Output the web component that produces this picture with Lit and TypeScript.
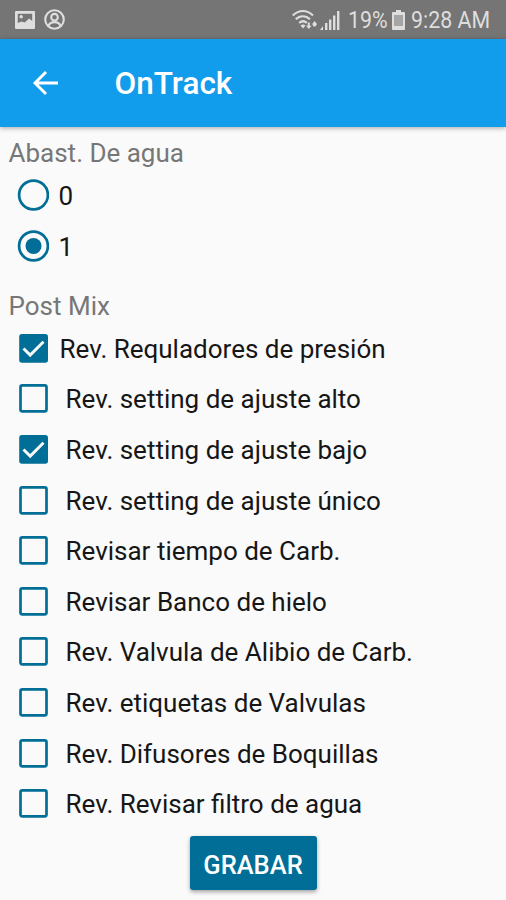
import { LitElement, html, css, svg } from "lit";
import { customElement, property, state } from "lit/decorators.js";
import { classMap } from "lit/directives/class-map.js";

@customElement("status-bar")
class StatusBar extends LitElement {
  static styles = css`
    :host { display: flex; justify-content: space-between; height: 38.5px; background: #757575; color: #dedede; }
    .left, .right { display: flex; align-items: center; }
    .left { padding: 1px 0 0 15px; gap: 9px; }
    .right { padding: 2px 16px 0 0; }
    svg { display: block; }
    .bars { margin-left: 2px; }
    .text { font-size: 24px; line-height: 26px; white-space: nowrap; }
    .pct { width: 37.5px; margin-left: 7.5px; }
    .time { width: 79px; margin-left: 6px; }
    .battery { margin-left: 7px; }
    .fit { display: inline-block; transform: scaleX(0.89); transform-origin: left; }
  `;
  render() {
    return html`
      <div class="left">
        <svg width="20" height="18" viewBox="0 0 20 18">
          <path fill="#dedede" fill-rule="evenodd" d="M1 0h18a1 1 0 0 1 1 1v16a1 1 0 0 1-1 1H1a1 1 0 0 1-1-1V1a1 1 0 0 1 1-1zM2.700 2.700V12l4-1.500 3 1 4.500-4 3 2.500V2.700z"/>
          <circle cx="6.200" cy="5.700" r="1.700" fill="#dedede"/>
        </svg>
        <svg width="21" height="21" viewBox="0 0 21 21" fill="none" stroke="#dedede" stroke-width="2.100">
          <circle cx="10.500" cy="10.500" r="9.300"/>
          <circle cx="10.500" cy="8.200" r="3.300"/>
          <path d="M4.500 17c.8-2.600 3-3.900 6-3.900s5.200 1.300 6 3.900"/>
        </svg>
      </div>
      <div class="right">
        <svg width="26" height="22" viewBox="0 0 26 22" fill="none" stroke="#dedede" stroke-width="2.200">
          <path d="M.8 6.500C7 .5 15 .5 21 6.500M3.800 10.300c4-4.100 10-4.100 14.200 0M7.200 14c2.400-2.200 5.200-2.200 7.600-.2"/>
          <path fill="#dedede" stroke="none" d="M8.500 16.500c1.500-1.300 3.500-1.300 5 0l-2.500 3zM15.800 13.500h2v3.200h1.800L16.800 20l-2.800-3.300h1.800zM22.500 12l2.500 3-1.500 2.500h-2L20.200 15z"/>
        </svg>
        <svg class="bars" width="20" height="20" viewBox="0 0 20 20" fill="#dedede">
          <path d="M3 16v4H0zM5 13h2.400v7H5zM9 9.500h2.400V20H9zM13 5.500h2.400V20H13zM17 1h2.400v19H17z"/>
        </svg>
        <div class="text pct"><span class="fit">19%</span></div>
        <svg class="battery" width="13" height="20" viewBox="0 0 13 20">
          <path fill="#dedede" d="M4 0h5v2h3a1 1 0 0 1 1 1v16a1 1 0 0 1-1 1H1a1 1 0 0 1-1-1V3a1 1 0 0 1 1-1h3z"/>
          <path fill="#a5a5a5" d="M2 5h9v11H2z"/>
        </svg>
        <div class="text time"><span class="fit">9:28 AM</span></div>
      </div>
    `;
  }
}

@customElement("option-row")
class OptionRow extends LitElement {
  @property() kind: "radio" | "check" = "check";
  @property() label = "";
  @property({ type: Boolean }) checked = false;
  @property({ type: Boolean }) tight = false;

  static styles = css`
    :host { display: flex; align-items: center; height: 50.65px; padding-left: 17px; cursor: pointer; }
    svg { display: block; flex: none; }
    .label { margin-left: 16.5px; font-size: 26px; line-height: 30px; color: #161616; white-space: nowrap; padding-top: 2px; }
    .tight { margin-left: 10.5px; }
    .radio { margin-left: 9.500px; }
  `;

  private mark() {
    if (this.kind === "radio") {
      return svg`
        <circle cx="16.500" cy="16" r="14.400" fill="none" stroke="#006e96" stroke-width="2.700"/>
        ${this.checked ? svg`<circle cx="16.500" cy="16" r="8" fill="#006e96"/>` : ""}`;
    }
    return this.checked
      ? svg`
        <rect x="2.200" y="2" width="28.800" height="28.800" rx="2.800" fill="#006e96"/>
        <path d="M6.500 16.500l6.700 6.600L26.500 9.800" fill="none" stroke="#fafafa" stroke-width="2.900"/>`
      : svg`<rect x="3.500" y="3.400" width="26" height="26" rx="1.800" fill="none" stroke="#006e96" stroke-width="2.700"/>`;
  }

  render() {
    return html`
      <svg width="32" height="32" viewBox="0 0 32 32">${this.mark()}</svg>
      <span class=${classMap({ label: true, tight: this.tight, radio: this.kind === "radio" })}>${this.label}</span>
    `;
  }
}

@customElement("app-root")
class AppRoot extends LitElement {
  @state() private water = "1";
  @state() private tasks = [
    { label: "Rev. Requladores de presión", done: true },
    { label: "Rev. setting de ajuste alto", done: false },
    { label: "Rev. setting de ajuste bajo", done: true },
    { label: "Rev. setting de ajuste único", done: false },
    { label: "Revisar tiempo de Carb.", done: false },
    { label: "Revisar Banco de hielo", done: false },
    { label: "Rev. Valvula de Alibio de Carb.", done: false },
    { label: "Rev. etiquetas de Valvulas", done: false },
    { label: "Rev. Difusores de Boquillas", done: false },
    { label: "Rev. Revisar filtro de agua", done: false },
  ];

  static styles = css`
    :host { display: flex; flex-direction: column; height: 900px; overflow: hidden; background: #fafafa; font-family: Roboto, sans-serif; }
    .bar { display: flex; align-items: center; height: 88px; flex: none; background: #129cec; color: #fff; box-shadow: 0 1px 5px rgba(0, 0, 0, 0.35); }
    .back { margin-left: 31.5px; display: block; }
    .title { margin-left: 56px; font-size: 31.5px; font-weight: 500; line-height: 38px; padding-top: 3px; }
    .heading { font-size: 26px; line-height: 30px; color: #777; padding-left: 8.500px; }
    .water { padding-top: 11.800px; margin-bottom: 1.500px; }
    .mix { padding-top: 19.800px; margin-bottom: 1.400px; }
    .save { align-self: center; margin-top: 7.600px; width: 127px; height: 54px; flex: none; border: 0; border-radius: 3px; background: #006e96; color: #fff; font: 500 25.5px/30px Roboto, sans-serif; padding: 3px 0 0; box-shadow: 0 2px 4px rgba(0, 0, 0, 0.35); }
  `;

  private toggle(index: number) {
    this.tasks = this.tasks.map((t, i) => (i === index ? { ...t, done: !t.done } : t));
  }

  render() {
    return html`
      <status-bar></status-bar>
      <header class="bar">
        <svg class="back" width="27" height="26" viewBox="0 0 27 26" fill="none" stroke="#fff" stroke-width="2.900">
          <path d="M26 13H3M14 2L3 13l11 11"/>
        </svg>
        <div class="title">OnTrack</div>
      </header>
      <div class="heading water">Abast. De agua</div>
      ${["0", "1"].map((v) => html`
        <option-row kind="radio" label=${v} ?checked=${this.water === v} @click=${() => (this.water = v)}></option-row>`)}
      <div class="heading mix">Post Mix</div>
      ${this.tasks.map((t, i) => html`
        <option-row label=${t.label} ?checked=${t.done} ?tight=${i === 0} @click=${() => this.toggle(i)}></option-row>`)}
      <button class="save">GRABAR</button>
    `;
  }
}
